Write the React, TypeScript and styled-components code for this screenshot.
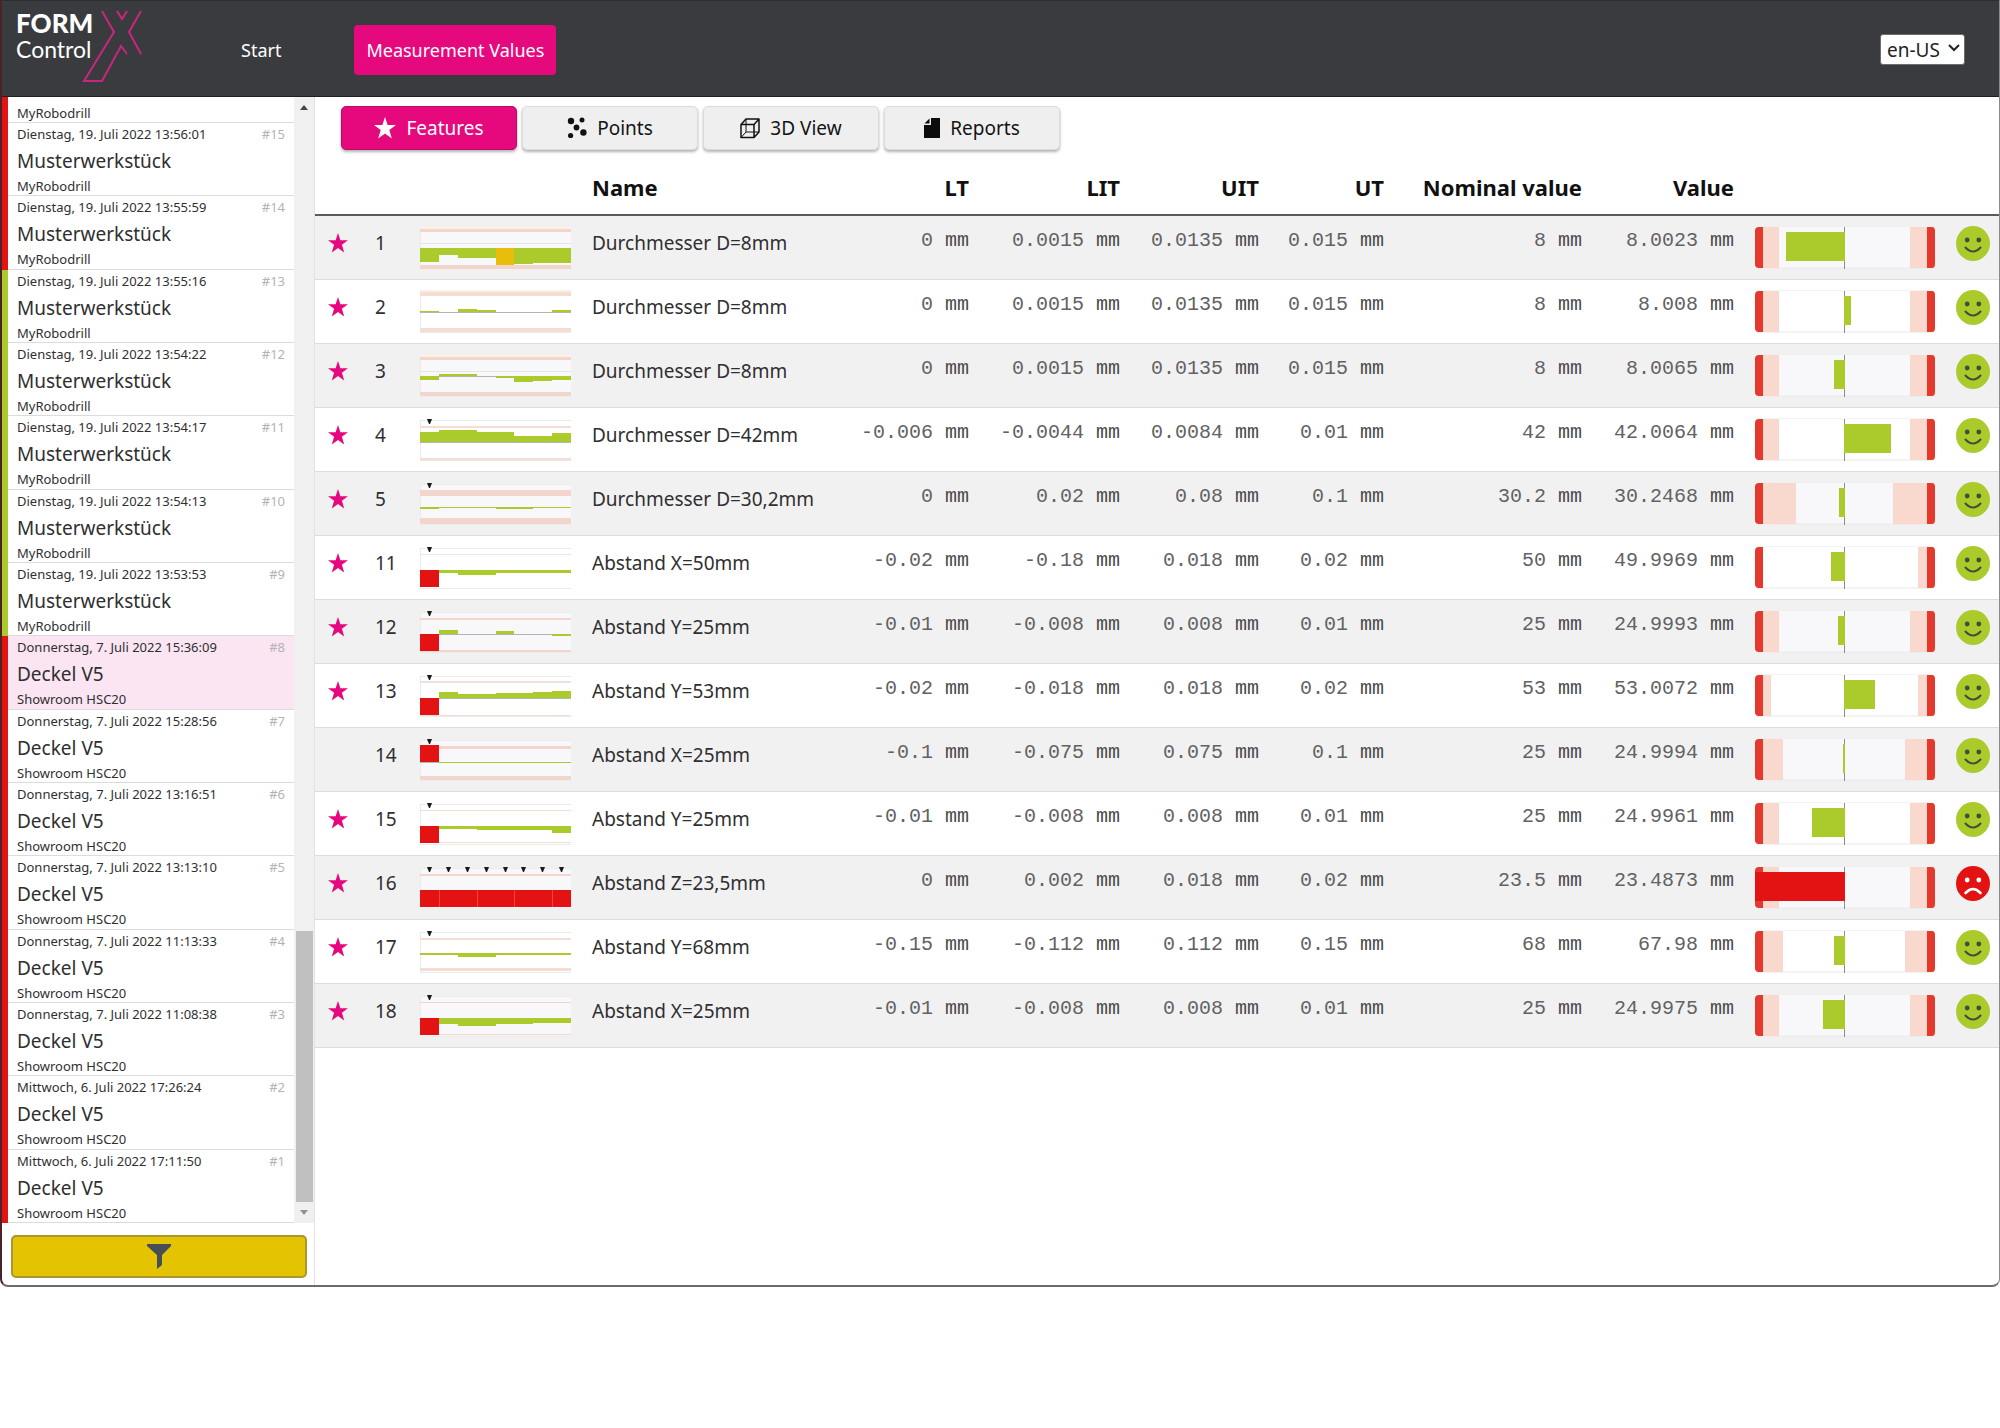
import React, { useState } from "react";
import styled, { createGlobalStyle, css } from "styled-components";

const color = {
  magenta: "#e6097e",
  green: "#abcb2c",
  red: "#e31313",
  limitRed: "#e6392d",
  warn: "#f9d9cd",
  dark: "#393b3f",
  stripe: "#f2f1f2",
  line: "#dcdcdc",
  yellow: "#e4c303",
};

const GlobalStyle = createGlobalStyle`
  *, *::before, *::after { box-sizing: border-box; }
  body {
    margin: 0;
    background: #fff;
    color: #2f2f31;
    font-family: "Noto Sans", "Open Sans", sans-serif;
    font-size: 19px;
  }
  button, select { font: inherit; color: inherit; }
`;

const Window = styled.div`
  display: flex;
  flex-direction: column;
  height: calc(90vh + 2px);
  min-height: 640px;
  border-right: 1px solid #8b8b8f;
  border-bottom: 2px solid #6b6a6d;
  border-left: 2px solid #4a2326;
  border-radius: 0 0 8px 8px;
  overflow: hidden;
`;

const Header = styled.header`
  display: flex;
  align-items: center;
  flex: none;
  height: 97px;
  padding: 2px 34px 0 0;
  background: ${color.dark};
  border-top: 1px solid #2c2e31;
  border-bottom: 1px solid #1f2022;
  color: #fff;
`;

const Logo = styled.a`
  display: flex;
  align-self: flex-start;
  width: 227px;
  padding: 6px 0 0 14px;
  color: #fff;
  text-decoration: none;
  font-family: Lato, sans-serif;
`;

const LogoText = styled.span`
  display: flex;
  flex-direction: column;
  width: 66px;
`;

const LogoStrong = styled.span`
  font-size: 26px;
  font-weight: 900;
  line-height: 28px;
`;

const LogoLight = styled.span`
  font-size: 23px;
  line-height: 24px;
`;

const LogoMark = styled.svg`
  display: block;
  flex: none;
  width: 60px;
  height: 74px;
`;

const MainNav = styled.nav`
  display: flex;
  flex: 1;
  gap: 61px;
`;

const NavLink = styled.a<{ $active?: boolean }>`
  display: flex;
  align-items: center;
  height: 50px;
  padding: 0 12px;
  border-radius: 4px;
  color: #fff;
  font-size: 18px;
  text-decoration: none;
  ${(p) => p.$active && css`background: ${color.magenta};`}
`;

const LanguageField = styled.div`
  position: relative;
  svg {
    position: absolute;
    top: 10px;
    right: 5px;
    pointer-events: none;
  }
`;

const LanguageSelect = styled.select`
  appearance: none;
  display: block;
  width: 85px;
  height: 31px;
  padding: 0 0 0 6px;
  border: 1px solid #6d6d6d;
  border-radius: 3px;
  background: #fff;
  color: #222;
`;

const Body = styled.div`
  display: flex;
  flex: 1;
  min-height: 0;
`;

const Sidebar = styled.aside`
  display: flex;
  flex-direction: column;
  flex: none;
  width: 313px;
  border-right: 1px solid #e3e1e4;
`;

const HistoryPane = styled.div`
  display: flex;
  flex: 1;
  min-height: 0;
`;

const HistoryList = styled.ol`
  display: flex;
  flex-direction: column;
  flex: 1;
  margin: 0;
  padding: 0;
  list-style: none;
  overflow: hidden;
`;

const HistoryItem = styled.li<{ $ok: boolean; $partial?: boolean }>`
  display: flex;
  flex-direction: column;
  justify-content: flex-end;
  min-height: 0;
  flex: ${(p) => (p.$partial ? "none" : "1 1 0")};
  height: ${(p) => (p.$partial ? "26px" : "auto")};
  border-left: 6px solid ${(p) => (p.$ok ? color.green : color.red)};
  overflow: hidden;
`;

const HistoryButton = styled.button<{ $selected: boolean }>`
  display: grid;
  grid-template-columns: 1fr auto;
  grid-template-rows: 22px 32px 18px;
  flex: 1 0 auto;
  padding: 0 9px;
  border: 0;
  border-bottom: 1px solid ${color.line};
  background: ${(p) => (p.$selected ? "#fbe5f2" : "#fff")};
  text-align: left;
  white-space: nowrap;
  cursor: pointer;
`;

const SmallText = styled.span`
  font-size: 13px;
  line-height: 22px;
`;

const Machine = styled.span`
  grid-column: 1 / -1;
  font-size: 13px;
  line-height: 18px;
`;

const ItemIndex = styled(SmallText)`
  color: #b5b2b6;
`;

const ItemTitle = styled.span`
  grid-column: 1 / -1;
  font-size: 19px;
  line-height: 32px;
`;

const ScrollTrack = styled.div`
  display: flex;
  flex-direction: column;
  justify-content: space-between;
  align-items: center;
  flex: none;
  width: 20px;
  background: #f0f0f1;
`;

const ScrollArrow = styled.span<{ $down?: boolean }>`
  width: 0;
  height: 0;
  margin: 8px 0;
  border: 4px solid transparent;
  border-top-width: ${(p) => (p.$down ? "5px" : "0")};
  border-bottom-width: ${(p) => (p.$down ? "0" : "5px")};
  border-top-color: ${(p) => (p.$down ? "#929292" : "transparent")};
  border-bottom-color: ${(p) => (p.$down ? "transparent" : "#454545")};
`;

const ScrollRail = styled.div`
  display: flex;
  flex-direction: column;
  justify-content: flex-end;
  flex: 1;
  width: 17px;
`;

const ScrollThumb = styled.div`
  height: 25%;
  background: #c1c0c1;
`;

const FilterBar = styled.div`
  flex: none;
  padding: 12px 7px 7px 9px;
`;

const FilterButton = styled.button`
  display: flex;
  align-items: center;
  justify-content: center;
  width: 100%;
  height: 43px;
  border: 2px solid #a9962c;
  border-radius: 5px;
  background: ${color.yellow};
  cursor: pointer;
`;

const Main = styled.main`
  flex: 1;
  min-width: 0;
  padding-top: 9px;
  overflow: hidden;
`;

const Tabs = styled.div`
  display: flex;
  gap: 5px;
  padding-left: 26px;
`;

const Tab = styled.button<{ $active: boolean }>`
  display: flex;
  align-items: center;
  justify-content: center;
  gap: 10px;
  width: 176px;
  height: 44px;
  border: 1px solid ${(p) => (p.$active ? "#b80a68" : "#dddcdd")};
  border-radius: 5px;
  background: ${(p) => (p.$active ? color.magenta : "#f0eff0")};
  box-shadow: 0 2px 3px rgba(0, 0, 0, 0.3);
  color: ${(p) => (p.$active ? "#fff" : "#141414")};
  font-size: 19px;
  cursor: pointer;
`;

const Table = styled.table`
  width: 100%;
  border-collapse: separate;
  border-spacing: 0;
  table-layout: fixed;
`;

const HeadCell = styled.th<{ $right?: boolean }>`
  height: 66px;
  padding: ${(p) => (p.$right ? "10px 12px 0 0" : "10px 0 0")};
  border-bottom: 2px solid #5b5a5c;
  color: #111;
  font-size: 22px;
  font-weight: 700;
  line-height: 30px;
  text-align: ${(p) => (p.$right ? "right" : "left")};
  white-space: nowrap;
`;

const Row = styled.tr`
  &:nth-child(odd) { background: ${color.stripe}; }
`;

const Cell = styled.td`
  height: 64px;
  padding: 13px 0 0;
  border-bottom: 1px solid ${color.line};
  line-height: 28px;
  vertical-align: top;
  white-space: nowrap;
`;

const StarCell = styled(Cell)`
  text-align: center;
`;

const IndexCell = styled(Cell)`
  padding-left: 14px;
`;

const GraphicCell = styled(Cell)<{ $indent?: number }>`
  padding-top: 10px;
  padding-left: ${(p) => p.$indent ?? 0}px;
  svg { display: block; }
`;

const NumberCell = styled(Cell)`
  padding: 11px 12px 0 0;
  color: #626264;
  font-family: "Liberation Mono", monospace;
  font-size: 20px;
  text-align: right;
`;

const Unit = styled.span`
  color: #4a4a4c;
`;

const FavouriteButton = styled.button`
  display: inline-flex;
  align-items: center;
  height: 28px;
  padding: 0;
  border: 0;
  background: none;
  color: ${color.magenta};
  cursor: pointer;
`;

type Run = { date: string; index: number; title: string; machine: string; ok: boolean };

const workpiece = (date: string, index: number, ok: boolean): Run => ({
  date, index, title: "Musterwerkstück", machine: "MyRobodrill", ok,
});
const cover = (date: string, index: number): Run => ({
  date, index, title: "Deckel V5", machine: "Showroom HSC20", ok: false,
});

const runs: Run[] = [
  workpiece("Dienstag, 19. Juli 2022 13:56:01", 15, false),
  workpiece("Dienstag, 19. Juli 2022 13:55:59", 14, false),
  workpiece("Dienstag, 19. Juli 2022 13:55:16", 13, true),
  workpiece("Dienstag, 19. Juli 2022 13:54:22", 12, true),
  workpiece("Dienstag, 19. Juli 2022 13:54:17", 11, true),
  workpiece("Dienstag, 19. Juli 2022 13:54:13", 10, true),
  workpiece("Dienstag, 19. Juli 2022 13:53:53", 9, true),
  cover("Donnerstag, 7. Juli 2022 15:36:09", 8),
  cover("Donnerstag, 7. Juli 2022 15:28:56", 7),
  cover("Donnerstag, 7. Juli 2022 13:16:51", 6),
  cover("Donnerstag, 7. Juli 2022 13:13:10", 5),
  cover("Donnerstag, 7. Juli 2022 11:13:33", 4),
  cover("Donnerstag, 7. Juli 2022 11:08:38", 3),
  cover("Mittwoch, 6. Juli 2022 17:26:24", 2),
  cover("Mittwoch, 6. Juli 2022 17:11:50", 1),
];

/* A trend holds the base line, the warning bands and the outer edge of each of the eight steps. */
type Trend = {
  base: number;
  steps: number[];
  bands: [number, number][];
  flagged?: number[];
  warned?: number;
  failed?: number[];
};

type Feature = {
  id: number;
  star: boolean;
  name: string;
  values: [string, string, string, string, string, string];
  trend: Trend;
  left: number;
  right: number;
  bar: number;
};

const all = [0, 1, 2, 3, 4, 5, 6, 7];

const features: Feature[] = [
  { id: 1, star: true, name: "Durchmesser D=8mm", values: ["0", "0.0015", "0.0135", "0.015", "8", "8.0023"], left: 24, right: 155, bar: 31,
    trend: { base: 22, steps: [36, 29, 32, 32, 39, 38, 37, 37], bands: [[3, 6], [39, 43]], warned: 4 } },
  { id: 2, star: true, name: "Durchmesser D=8mm", values: ["0", "0.0015", "0.0135", "0.015", "8", "8.008"], left: 24, right: 155, bar: 95,
    trend: { base: 22, steps: [21, 22, 19, 20, 22, 22, 22, 20], bands: [[2, 6], [38, 42]] } },
  { id: 3, star: true, name: "Durchmesser D=8mm", values: ["0", "0.0015", "0.0135", "0.015", "8", "8.0065"], left: 24, right: 155, bar: 79,
    trend: { base: 22, steps: [26, 20, 20, 22, 24, 28, 27, 26], bands: [[3, 6], [38, 42]] } },
  { id: 4, star: true, name: "Durchmesser D=42mm", values: ["-0.006", "-0.0044", "0.0084", "0.01", "42", "42.0064"], left: 24, right: 155, bar: 135,
    trend: { base: 24, steps: [14, 12, 12, 14, 14, 18, 18, 15], bands: [[8, 10], [40, 42]], flagged: [0] } },
  { id: 5, star: true, name: "Durchmesser D=30,2mm", values: ["0", "0.02", "0.08", "0.1", "30.2", "30.2468"], left: 41, right: 138, bar: 84,
    trend: { base: 25, steps: [27, 26, 26, 26, 27, 27, 26, 26], bands: [[8, 14], [36, 42]], flagged: [0] } },
  { id: 11, star: true, name: "Abstand X=50mm", values: ["-0.02", "-0.18", "0.018", "0.02", "50", "49.9969"], left: 8, right: 163, bar: 76,
    trend: { base: 24, steps: [41, 27, 29, 29, 27, 27, 27, 27], bands: [], flagged: [0], failed: [0] } },
  { id: 12, star: true, name: "Abstand Y=25mm", values: ["-0.01", "-0.008", "0.008", "0.01", "25", "24.9993"], left: 24, right: 155, bar: 83,
    trend: { base: 24, steps: [41, 20, 24, 24, 21, 24, 24, 26], bands: [[8, 10], [40, 42]], flagged: [0], failed: [0] } },
  { id: 13, star: true, name: "Abstand Y=53mm", values: ["-0.02", "-0.018", "0.018", "0.02", "53", "53.0072"], left: 16, right: 163, bar: 119,
    trend: { base: 24, steps: [41, 18, 20, 20, 19, 19, 18, 17], bands: [[7, 8], [41, 42]], flagged: [0], failed: [0] } },
  { id: 14, star: false, name: "Abstand X=25mm", values: ["-0.1", "-0.075", "0.075", "0.1", "25", "24.9994"], left: 28, right: 150, bar: 88,
    trend: { base: 24, steps: [7, 25, 25, 25, 25, 25, 25, 25], bands: [[8, 11], [38, 42]], flagged: [0], failed: [0] } },
  { id: 15, star: true, name: "Abstand Y=25mm", values: ["-0.01", "-0.008", "0.008", "0.01", "25", "24.9961"], left: 24, right: 155, bar: 57,
    trend: { base: 24, steps: [41, 27, 27, 28, 28, 28, 28, 31], bands: [[8, 9], [40, 41]], flagged: [0], failed: [0] } },
  { id: 16, star: true, name: "Abstand Z=23,5mm", values: ["0", "0.002", "0.018", "0.02", "23.5", "23.4873"], left: 24, right: 155, bar: 0,
    trend: { base: 24, steps: [41, 41, 41, 41, 41, 41, 41, 41], bands: [[8, 10]], flagged: all, failed: all } },
  { id: 17, star: true, name: "Abstand Y=68mm", values: ["-0.15", "-0.112", "0.112", "0.15", "68", "67.98"], left: 28, right: 150, bar: 79,
    trend: { base: 23, steps: [25, 25, 27, 27, 25, 25, 25, 25], bands: [[8, 10], [38, 41]], flagged: [0] } },
  { id: 18, star: true, name: "Abstand X=25mm", values: ["-0.01", "-0.008", "0.008", "0.01", "25", "24.9975"], left: 24, right: 155, bar: 68,
    trend: { base: 24, steps: [41, 30, 32, 32, 30, 30, 29, 29], bands: [[8, 9], [40, 41]], flagged: [0], failed: [0] } },
];

const StarIcon = ({ size }: { size: number }) => (
  <svg width={size} height={size} viewBox="0 0 20 20" fill="currentColor" aria-hidden="true">
    <path d="M10 0l2.4 7.2H20l-6.1 4.6 2.3 7.7L10 14.9l-6.2 4.6 2.3-7.7L0 7.2h7.6z" />
  </svg>
);

const PointsIcon = () => (
  <svg width="20" height="22" viewBox="0 0 20 22" fill="#111" aria-hidden="true">
    <circle cx="4" cy="4" r="3.2" />
    <circle cx="15" cy="3" r="2.5" />
    <circle cx="9.5" cy="10.5" r="2.9" />
    <circle cx="16.4" cy="15.5" r="3.2" />
    <circle cx="3.6" cy="18.5" r="2.6" />
  </svg>
);

const CubeIcon = () => (
  <svg width="20" height="21" viewBox="0 0 20 21" fill="none" stroke="#111" strokeWidth="1.5" strokeLinejoin="round" aria-hidden="true">
    <path d="M1 6.500h13v13H1zM1 6.500L6 1h13l-5 5.500M19 1v13l-5 5.500" />
    <path d="M6 1v13h13M6 14l-5 5.500" strokeWidth="1" />
  </svg>
);

const ReportIcon = () => (
  <svg width="16" height="20" viewBox="0 0 16 20" fill="#0c0c0c" aria-hidden="true">
    <path d="M7 0h9v20H0V7h7z" />
    <path d="M5.500 0.500v5H0.500z" />
  </svg>
);

const Smiley = ({ happy }: { happy: boolean }) => {
  const ink = happy ? "#3f4f3a" : "#fff";
  return (
    <svg width="34" height="35" viewBox="0 0 34 35" role="img" aria-label={happy ? "In tolerance" : "Out of tolerance"}>
      <ellipse cx="17" cy="17.5" rx="17" ry="17.5" fill={happy ? color.green : color.red} />
      <circle cx="11.2" cy="14" r="2.4" fill={ink} />
      <circle cx="22.8" cy="14" r="2.4" fill={ink} />
      <path
        d={happy ? "M9.500 21.500q7.500 8 15 0" : "M9.500 27q7.500-8 15 0"}
        fill="none"
        stroke={ink}
        strokeWidth={happy ? 2 : 2.6}
        strokeLinecap="round"
      />
    </svg>
  );
};

const TrendChart = ({ trend, striped }: { trend: Trend; striped: boolean }) => {
  const flagged = trend.flagged ?? [];
  const failed = trend.failed ?? [];
  const top = flagged.length ? 2 : 0;
  const at = (i: number) => Math.round((i * 151) / 8);
  return (
    <svg width="151" height="43" viewBox="0 0 151 43" shapeRendering="crispEdges" role="img" aria-label="Trend">
      <rect x="0" y={top} width="151" height={42 - top} fill={striped ? "#f8f7f9" : "#fff"} stroke="#ecebec" />
      {!flagged.length && <rect x="0" y="0" width="151" height="3" fill="#fbefe9" />}
      <rect x="0" y={flagged.length ? 8 : 17} width="151" height="1" fill={flagged.length || striped ? "#e6e6e4" : "none"} />
      {trend.bands.map(([a, b]) => (
        <rect key={a} x="0" y={a} width="151" height={b - a} fill={striped ? "#f2d6cb" : "#f6ddd4"} />
      ))}
      <rect x="0" y={trend.base} width="151" height="1" fill="#b3b5ae" />
      {trend.steps.map((edge, i) => {
        const fill = failed.includes(i) ? color.red : trend.warned === i ? "#e8bd0c" : color.green;
        const y = Math.min(edge, trend.base);
        return <rect key={i} x={at(i)} y={y} width={at(i + 1) - at(i)} height={Math.abs(edge - trend.base)} fill={fill} />;
      })}
      {failed.length === 8 && [1, 3, 5, 7].map((i) => (
        <rect key={i} x={at(i)} y={trend.base} width="1" height="17" fill="#f2452f" />
      ))}
      {flagged.map((i) => (
        <path key={i} d={`M${at(i) + 7} 1h5l-2 5h-1z`} fill="#1a1a1a" shapeRendering="auto" />
      ))}
    </svg>
  );
};

const ToleranceBar = ({ feature, striped }: { feature: Feature; striped: boolean }) => {
  const { left, right, bar } = feature;
  const failed = bar === 0;
  return (
    <svg width="181" height="43" viewBox="0 0 181 43" role="img" aria-label="Deviation">
      <rect x="2" y="0" width="176" height="42" fill={striped ? "#f8f7f9" : "#fff"} stroke="#e9e8e9" />
      <rect x="8" y="1" width={left - 8} height="41" fill={color.warn} />
      <rect x={right} y="1" width={172 - right} height="41" fill={color.warn} />
      <path d="M8 1v41H4q-4 0-4-4V5q0-4 4-4z" fill={color.limitRed} />
      <path d="M172 1v41h5q3 0 3-4V5q0-4-3-4z" fill={color.limitRed} />
      <rect x="89" y="1" width="1" height="42" fill="#8d8f88" />
      <rect x={Math.min(bar, 89)} y="6" width={Math.abs(bar - 89) + 1} height="29" fill={failed ? color.red : color.green} />
    </svg>
  );
};

const tabs = [
  { name: "Features", icon: <StarIcon size={22} /> },
  { name: "Points", icon: <PointsIcon /> },
  { name: "3D View", icon: <CubeIcon /> },
  { name: "Reports", icon: <ReportIcon /> },
];

const numericHeads = ["LT", "LIT", "UIT", "UT", "Nominal value", "Value"];
const columnWidths = [46, 59, 172, undefined, 136, 151, 139, 125, 198, 152, 200, 53];

export default function App() {
  const [tab, setTab] = useState("Features");
  const [selected, setSelected] = useState(8);

  return (
    <>
      <GlobalStyle />
      <Window>
        <Header>
          <Logo href="#" aria-label="FORM Control X">
            <LogoText>
              <LogoStrong>FORM</LogoStrong>
              <LogoLight>Control</LogoLight>
            </LogoText>
            <LogoMark viewBox="80 10 60 74" fill="none" stroke="#c9267c" strokeWidth="2" aria-hidden="true">
              <path d="M100 12l12 21-30 49h18l19-35 6 8M139 12l-12 21 12 22M115 12l5 8 5-8" />
            </LogoMark>
          </Logo>
          <MainNav>
            <NavLink href="#start">Start</NavLink>
            <NavLink href="#values" $active>Measurement Values</NavLink>
          </MainNav>
          <LanguageField>
            <LanguageSelect aria-label="Language" defaultValue="en-US">
              <option>en-US</option>
              <option>de-DE</option>
            </LanguageSelect>
            <svg width="12" height="8" viewBox="0 0 12 8" fill="none" stroke="#222" strokeWidth="2" aria-hidden="true">
              <path d="M1 1l5 5 5-5" />
            </svg>
          </LanguageField>
        </Header>

        <Body>
          <Sidebar>
            <HistoryPane>
              <HistoryList>
                <HistoryItem $ok={false} $partial>
                  <HistoryButton $selected={false}>
                    <span />
                    <span />
                    <ItemTitle />
                    <Machine>MyRobodrill</Machine>
                  </HistoryButton>
                </HistoryItem>
                {runs.map((run) => (
                  <HistoryItem key={run.index} $ok={run.ok}>
                    <HistoryButton $selected={run.index === selected} onClick={() => setSelected(run.index)}>
                      <SmallText>{run.date}</SmallText>
                      <ItemIndex>#{run.index}</ItemIndex>
                      <ItemTitle>{run.title}</ItemTitle>
                      <Machine>{run.machine}</Machine>
                    </HistoryButton>
                  </HistoryItem>
                ))}
              </HistoryList>
              <ScrollTrack aria-hidden="true">
                <ScrollArrow />
                <ScrollRail>
                  <ScrollThumb />
                </ScrollRail>
                <ScrollArrow $down />
              </ScrollTrack>
            </HistoryPane>
            <FilterBar>
              <FilterButton aria-label="Filter">
                <svg width="24" height="25" viewBox="0 0 24 25" fill="#464f55" aria-hidden="true">
                  <path d="M0 0h24v2l-9 9v10l-5 4V11L0 2z" />
                </svg>
              </FilterButton>
            </FilterBar>
          </Sidebar>

          <Main>
            <Tabs role="tablist">
              {tabs.map(({ name, icon }) => (
                <Tab key={name} role="tab" aria-selected={tab === name} $active={tab === name} onClick={() => setTab(name)}>
                  {icon}
                  {name}
                </Tab>
              ))}
            </Tabs>
            <Table>
              <colgroup>
                {columnWidths.map((width, i) => <col key={i} width={width} />)}
              </colgroup>
              <thead>
                <tr>
                  <HeadCell />
                  <HeadCell />
                  <HeadCell />
                  <HeadCell>Name</HeadCell>
                  {numericHeads.map((head) => <HeadCell key={head} $right>{head}</HeadCell>)}
                  <HeadCell />
                  <HeadCell />
                </tr>
              </thead>
              <tbody>
                {features.map((feature, i) => (
                  <Row key={feature.id}>
                    <StarCell>
                      {feature.star && (
                        <FavouriteButton aria-label={`Favourite ${feature.id}`}>
                          <StarIcon size={20} />
                        </FavouriteButton>
                      )}
                    </StarCell>
                    <IndexCell>{feature.id}</IndexCell>
                    <GraphicCell><TrendChart trend={feature.trend} striped={i % 2 === 0} /></GraphicCell>
                    <Cell>{feature.name}</Cell>
                    {feature.values.map((value, n) => (
                      <NumberCell key={n}>{value} <Unit>mm</Unit></NumberCell>
                    ))}
                    <GraphicCell $indent={9}><ToleranceBar feature={feature} striped={i % 2 === 0} /></GraphicCell>
                    <GraphicCell $indent={10}><Smiley happy={feature.bar !== 0} /></GraphicCell>
                  </Row>
                ))}
              </tbody>
            </Table>
          </Main>
        </Body>
      </Window>
    </>
  );
}
